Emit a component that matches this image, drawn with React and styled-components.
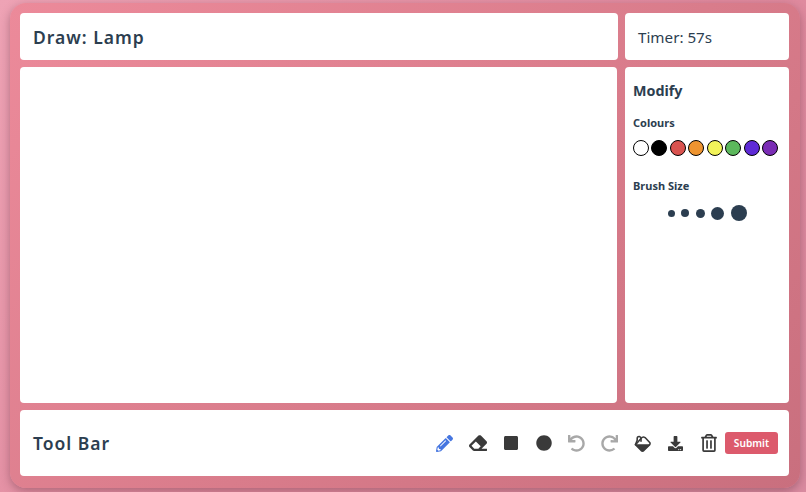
import React from 'react'
import styled, { createGlobalStyle } from 'styled-components'
import { FaPencilAlt, FaEraser, FaSquare, FaCircle, FaUndo, FaRedo, FaDownload, FaRegTrashAlt } from 'react-icons/fa'

const GlobalStyle = createGlobalStyle`
  html, body {
    margin: 0;
    height: 100%;
  }
  body {
    font-family: 'Noto Sans', 'Open Sans', sans-serif;
    background: linear-gradient(135deg, #eea3b5 0%, #e08a9e 55%, #d98ba0 100%);
    overflow: hidden;
  }
`

const Page = styled.div`
  width: 806px;
  height: 492px;
  box-sizing: border-box;
  padding: 3px 6px 4px 10px;
`

const Frame = styled.div`
  height: 100%;
  box-sizing: border-box;
  padding: 10px 10px 11px 10px;
  border-radius: 16px;
  background: linear-gradient(135deg, #ec8a9a 0%, #d97c8b 55%, #c96f7e 100%);
  box-shadow: 0 3px 10px rgba(90, 40, 55, 0.4);
  display: grid;
  grid-template-columns: 598px 164px;
  grid-template-rows: 47px 336px 66px;
  column-gap: 7px;
  row-gap: 7px;
`

const Panel = styled.div`
  background: #fff;
  border-radius: 4px;
  color: #2c3e50;
`

const Header = styled(Panel)`
  display: flex;
  align-items: center;
  padding: 0 13px;
`

const Title = styled.h1`
  margin: 0;
  font-size: 17.5px;
  font-weight: 600;
  letter-spacing: 1px;
`

const Timer = styled.div`
  font-size: 15.2px;
`

const Canvas = styled(Panel)`
  margin-right: 1px;
`

const Side = styled(Panel)`
  padding: 14px 8px;
`

const SideTitle = styled.h2`
  margin: 0 0 14px;
  font-size: 14.3px;
  line-height: 20px;
  font-weight: 700;
`

const Label = styled.h3`
  margin: 0;
  font-size: 11px;
  line-height: 16px;
  font-weight: 700;
`

const Swatches = styled.div`
  display: flex;
  gap: 2.45px;
  margin: 9px 0 22px;
`

const Swatch = styled.div`
  box-sizing: border-box;
  width: 16px;
  height: 16px;
  border: 1.7px solid #000;
  border-radius: 50%;
  background: ${p => p.$color};
`

const Sizes = styled.div`
  display: flex;
  align-items: center;
  justify-content: center;
  gap: 6.5px;
  margin-top: 11px;
`

const Dot = styled.div`
  width: ${p => p.$size}px;
  height: ${p => p.$size}px;
  border-radius: 50%;
  background: #2c3e50;
`

const ToolBar = styled(Header)`
  grid-column: 1 / 3;
  justify-content: space-between;
  padding-right: 11px;
`

const Tools = styled.div`
  display: flex;
  align-items: center;
`

const Tool = styled.div`
  width: 33px;
  height: 33px;
  display: flex;
  align-items: center;
  justify-content: center;
  font-size: ${p => p.$size || 16}px;
  color: ${p => p.$color || '#3a3a3a'};
`

const Submit = styled.button`
  width: 53px;
  height: 22px;
  padding: 0;
  border: none;
  border-radius: 3px;
  background: #dc5a6c;
  color: #fff;
  font-family: inherit;
  font-size: 10.2px;
  font-weight: 600;
`

// bucket tipped over, lower half full, handle looping at the upper left
const BucketIcon = () => (
  <svg width="17" height="17" viewBox="0 0 16 16" fill="none" stroke="currentColor" strokeWidth="1.5" strokeLinejoin="round" strokeLinecap="round">
    <path d="M6.6 3.2 Q8.4 1 10.4 2.4 L14.8 7 Q15.4 8 14.8 9 L9.2 14.6 Q8 15.4 6.8 14.6 L1.4 9.2 Z" />
    <path d="M2.6 9.4 H13.8 L8 15 Z" fill="currentColor" />
    <path d="M1.4 9 L3 5 V3.2 Q3.2 1.2 5 1.4 Q6.6 1.8 6.6 3.6 V5.8" />
  </svg>
)

const colours = ['#fff', '#000', '#d9534f', '#ee9430', '#f2f35a', '#5cb85c', '#5e2ad6', '#7a2db5']
const sizes = [7, 8, 9, 13, 16]

export default function App() {
  return (
    <Page>
      <GlobalStyle />
      <Frame>
        <Header><Title>Draw: Lamp</Title></Header>
        <Header><Timer>Timer: 57s</Timer></Header>
        <Canvas />
        <Side>
          <SideTitle>Modify</SideTitle>
          <Label>Colours</Label>
          <Swatches>
            {colours.map(c => <Swatch key={c} $color={c} />)}
          </Swatches>
          <Label>Brush Size</Label>
          <Sizes>
            {sizes.map((s, i) => <Dot key={i} $size={s} />)}
          </Sizes>
        </Side>
        <ToolBar>
          <Title>Tool Bar</Title>
          <Tools>
            <Tool $color="#4676e0" $size={17}><FaPencilAlt /></Tool>
            <Tool $size={18}><FaEraser /></Tool>
            <Tool><FaSquare /></Tool>
            <Tool><FaCircle /></Tool>
            <Tool $color="#a8a8a8" $size={17}><FaUndo /></Tool>
            <Tool $color="#a8a8a8" $size={17}><FaRedo /></Tool>
            <Tool><BucketIcon /></Tool>
            <Tool $size={15}><FaDownload /></Tool>
            <Tool $size={18}><FaRegTrashAlt /></Tool>
            <Submit>Submit</Submit>
          </Tools>
        </ToolBar>
      </Frame>
    </Page>
  )
}
